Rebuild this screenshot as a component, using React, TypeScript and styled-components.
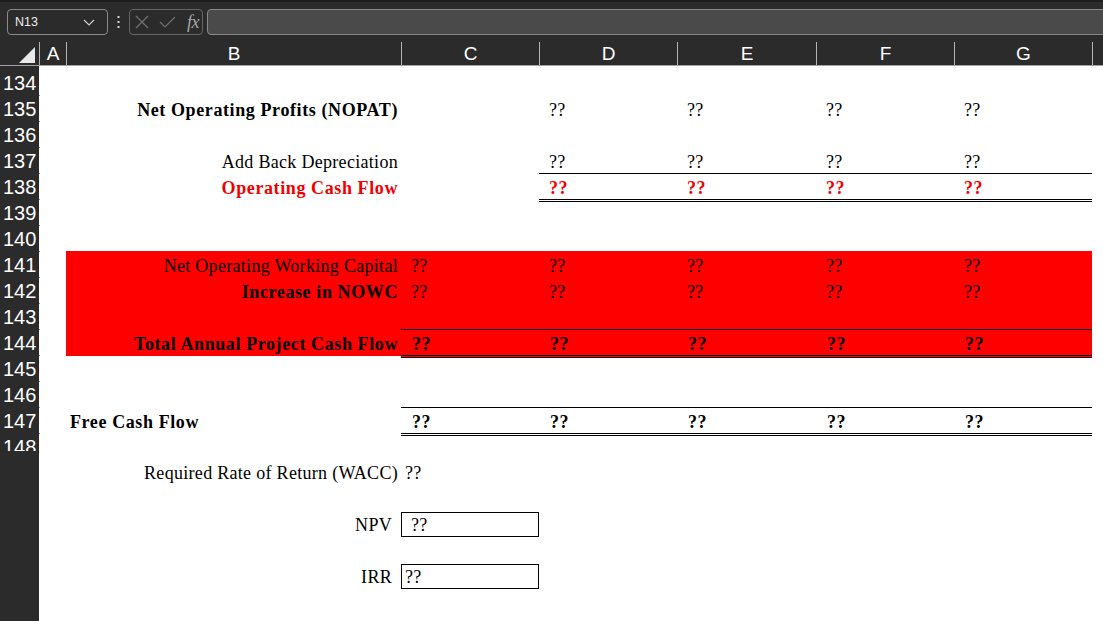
import styled, { createGlobalStyle } from 'styled-components';

const COLS = '39px 27px 335px 138px 138px 139px 138px 138px 1fr';
const LETTERS = ['A', 'B', 'C', 'D', 'E', 'F', 'G', 'H'];

const GlobalStyle = createGlobalStyle`
  html, body {
    margin: 0;
    padding: 0;
    background: #ffffff;
  }
  body {
    font-family: "Liberation Serif", "Times New Roman", serif;
  }
`;

const Window = styled.div`
  width: 1103px;
  height: 621px;
  overflow: hidden;
  display: flex;
  flex-direction: column;
  background: #ffffff;
`;

/* ---------- formula bar ---------- */

const FormulaBar = styled.div`
  height: 42px;
  box-sizing: border-box;
  background: #2b2b2b;
  border-top: 2px solid #1e1e1e;
  padding: 7px 0 0 7px;
  display: flex;
  align-items: flex-start;
`;

const NameBox = styled.div`
  width: 101px;
  height: 26px;
  box-sizing: border-box;
  border: 1px solid #8a8a8a;
  border-radius: 4px;
  display: flex;
  align-items: center;
  justify-content: space-between;
  padding: 0 12px 0 7px;
  color: #ececec;
  font-family: "Liberation Sans", Arial, sans-serif;
  font-size: 12.5px;
`;

const Grip = styled.div`
  width: 21px;
  height: 26px;
  display: flex;
  align-items: center;
  justify-content: center;
`;

const FxBox = styled.div`
  width: 74px;
  height: 26px;
  box-sizing: border-box;
  border: 1px solid #666666;
  border-radius: 4px;
  display: flex;
  align-items: center;
  gap: 10px;
  padding-left: 5px;
`;

const FxLabel = styled.span`
  color: #a8a8a8;
  font-family: "Liberation Serif", "Times New Roman", serif;
  font-style: italic;
  font-size: 18px;
  margin-left: 1px;
  letter-spacing: -0.5px;
`;

const FormulaInput = styled.div`
  flex: 1;
  height: 26px;
  box-sizing: border-box;
  margin: 0 -8px 0 4px;
  background: #4a4a4a;
  border: 1px solid #8a8a8a;
  border-radius: 4px;
`;

/* ---------- column header ---------- */

const ColumnHeader = styled.div`
  display: grid;
  grid-template-columns: ${COLS};
  height: 24px;
  box-sizing: border-box;
  background: #2b2b2b;
  border-bottom: 1px solid #a3a3a3;
`;

const Corner = styled.div`
  display: flex;
  align-items: flex-end;
  justify-content: flex-end;
  padding: 0 4px 2px 0;
`;

const ColLabel = styled.div`
  border-left: 1px solid #b4b4b4;
  display: flex;
  align-items: center;
  justify-content: center;
  color: #ffffff;
  font-family: "Liberation Sans", Arial, sans-serif;
  font-size: 19px;
  padding-top: 1px;
`;

/* ---------- sheet body ---------- */

const Body = styled.div`
  flex: 1;
  display: flex;
  flex-direction: column;
  background: linear-gradient(to right, #2b2b2b 39px, #ffffff 39px);
`;

const Row = styled.div<{ $h: number }>`
  display: grid;
  grid-template-columns: ${COLS};
  height: ${p => p.$h}px;
`;

const RowNum = styled.div<{ $padTop: number }>`
  background: #2b2b2b;
  display: flex;
  padding-top: ${p => p.$padTop}px;
`;

const Num = styled.div<{ $sep: boolean; $clip: boolean }>`
  flex: 1;
  margin-left: 3px;
  padding: 3px 4px 0 0;
  display: flex;
  align-items: center;
  justify-content: center;
  color: #ffffff;
  font-family: "Liberation Sans", Arial, sans-serif;
  font-size: 20px;
  border-bottom: ${p => (p.$sep ? '1px solid #8e8e8e' : 'none')};
  clip-path: ${p => (p.$clip ? 'inset(0 0 8px 0)' : 'none')};
`;

type Align = 'left' | 'right';

const Cell = styled.div<{
  $align: Align;
  $pl: number;
  $pr: number;
  $bold: boolean;
  $red: boolean;
  $fill: boolean;
  $top: boolean;
  $dbl: boolean;
  $boxed: boolean;
}>`
  box-sizing: border-box;
  min-width: 0;
  display: flex;
  align-items: center;
  justify-content: ${p => (p.$align === 'right' ? 'flex-end' : 'flex-start')};
  padding: 3px ${p => p.$pr}px 0 ${p => p.$pl}px;
  white-space: nowrap;
  font-size: 18px;
  font-weight: ${p => (p.$bold ? 700 : 400)};
  letter-spacing: ${p => (p.$bold ? '0.6px' : '0.3px')};
  color: ${p => (p.$red ? '#f00000' : '#000000')};
  background: ${p => (p.$fill ? '#ff0000' : 'transparent')};
  border-top: ${p => (p.$top ? '1px solid #000' : 'none')};
  border-bottom: ${p => (p.$dbl ? '3px double #000' : 'none')};
  margin-bottom: ${p => (p.$dbl ? '-2px' : '0')};
  ${p => (p.$boxed ? 'border: 1.5px solid #000; margin-top: 1px; padding-top: 1px;' : '')}
`;

/* ---------- data ---------- */

type Spec = {
  text?: string;
  bold?: boolean;
  red?: boolean;
  align?: Align;
  pl?: number;
  pr?: number;
  top?: boolean;
  dbl?: boolean;
  boxed?: boolean;
};

type RowSpec = { n: number; h?: number; fill?: boolean; cells?: Record<string, Spec> };

const span = (cols: string[], spec: Spec) =>
  Object.fromEntries(cols.map(c => [c, spec])) as Record<string, Spec>;

const CG = ['C', 'D', 'E', 'F', 'G'];
const DG = ['D', 'E', 'F', 'G'];
const q: Spec = { text: '??', pl: 10 };
const label = (text: string, extra: Spec = {}): Spec => ({ text, align: 'right', pr: 3, ...extra });

const ROWS: RowSpec[] = [
  { n: 134, h: 29 },
  { n: 135, cells: { B: label('Net Operating Profits (NOPAT)', { bold: true }), ...span(DG, q) } },
  { n: 136 },
  { n: 137, cells: { B: label('Add Back Depreciation'), ...span(DG, q) } },
  {
    n: 138,
    cells: {
      B: label('Operating Cash Flow', { bold: true, red: true }),
      ...span(DG, { ...q, bold: true, red: true, top: true, dbl: true }),
    },
  },
  { n: 139 },
  { n: 140 },
  { n: 141, fill: true, cells: { B: label('Net Operating Working Capital'), ...span(CG, q) } },
  { n: 142, fill: true, cells: { B: label('Increase in NOWC', { bold: true }), ...span(CG, q) } },
  { n: 143, fill: true },
  {
    n: 144,
    fill: true,
    cells: {
      B: label('Total Annual Project Cash Flow', { bold: true }),
      ...span(CG, { ...q, pl: 11, bold: true, top: true, dbl: true }),
    },
  },
  { n: 145 },
  { n: 146 },
  {
    n: 147,
    cells: {
      B: { text: 'Free Cash Flow', bold: true, pl: 4 },
      ...span(CG, { ...q, pl: 11, bold: true, top: true, dbl: true }),
    },
  },
  { n: 148 },
  { n: 149, cells: { B: label('Required Rate of Return (WACC)'), C: { text: '??', pl: 4 } } },
  { n: 150 },
  { n: 151, cells: { B: label('NPV', { pr: 9 }), C: { text: '??', pl: 9, boxed: true } } },
  { n: 152 },
  { n: 153, cells: { B: label('IRR', { pr: 9 }), C: { text: '??', pl: 3, boxed: true } } },
];

const FILLED = ['B', 'C', 'D', 'E', 'F', 'G'];

/* ---------- icons ---------- */

const Chevron = () => (
  <svg width="12" height="7" viewBox="0 0 12 7">
    <path d="M1 1 L6 6 L11 1" fill="none" stroke="#cfcfcf" strokeWidth="1.2" />
  </svg>
);

const Dots = () => (
  <svg width="3" height="12" viewBox="0 0 3 12">
    <rect x="0.5" y="0" width="2" height="2" fill="#d6d6d6" />
    <rect x="0.5" y="5" width="2" height="2" fill="#d6d6d6" />
    <rect x="0.5" y="10" width="2" height="2" fill="#d6d6d6" />
  </svg>
);

const CancelIcon = () => (
  <svg width="14" height="14" viewBox="0 0 14 14">
    <path d="M1 1 L13 13 M13 1 L1 13" stroke="#707070" strokeWidth="1.2" fill="none" />
  </svg>
);

const EnterIcon = () => (
  <svg width="17" height="12" viewBox="0 0 17 12">
    <path d="M1 6 L6 11 L16 1" stroke="#707070" strokeWidth="1.2" fill="none" />
  </svg>
);

const CornerTriangle = () => (
  <svg width="16" height="16" viewBox="0 0 16 16">
    <path d="M16 0 L16 16 L0 16 Z" fill="#e9e9e9" />
  </svg>
);

/* ---------- app ---------- */

const App = () => {
  return (
    <Window>
      <GlobalStyle />
      <FormulaBar>
        <NameBox>
          <span>N13</span>
          <Chevron />
        </NameBox>
        <Grip>
          <Dots />
        </Grip>
        <FxBox>
          <CancelIcon />
          <EnterIcon />
          <FxLabel>fx</FxLabel>
        </FxBox>
        <FormulaInput />
      </FormulaBar>

      <ColumnHeader>
        <Corner>
          <CornerTriangle />
        </Corner>
        {LETTERS.map(l => (
          <ColLabel key={l}>{l === 'H' ? '' : l}</ColLabel>
        ))}
      </ColumnHeader>

      <Body>
        {ROWS.map(row => (
          <Row key={row.n} $h={row.h ?? 26}>
            <RowNum $padTop={row.h ? row.h - 26 : 0}>
              <Num $sep={row.n < 148} $clip={row.n === 148}>
                {row.n <= 148 ? row.n : ''}
              </Num>
            </RowNum>
            {LETTERS.map(col => {
              const s: Spec = row.cells?.[col] ?? {};
              return (
                <Cell
                  key={col}
                  $align={s.align ?? 'left'}
                  $pl={s.pl ?? 0}
                  $pr={s.pr ?? 0}
                  $bold={!!s.bold}
                  $red={!!s.red}
                  $fill={!!row.fill && FILLED.includes(col)}
                  $top={!!s.top}
                  $dbl={!!s.dbl}
                  $boxed={!!s.boxed}
                >
                  {s.text}
                </Cell>
              );
            })}
          </Row>
        ))}
      </Body>
    </Window>
  );
};

export default App;
